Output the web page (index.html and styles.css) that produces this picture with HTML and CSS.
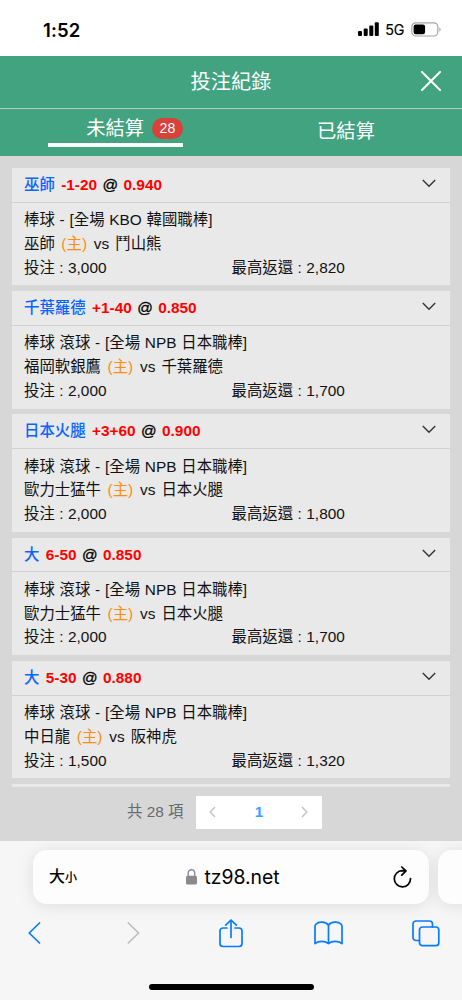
FILE: index.html
```html
<!DOCTYPE html>
<html lang="zh-Hant">
<head>
<meta charset="utf-8">
<meta name="viewport" content="width=device-width">
<title>投注紀錄</title>
<link rel="stylesheet" href="styles.css">
</head>
<body>
<div class="phone">
  <div class="status">
    <span class="time">1:52</span>
    <div class="signals">
      <svg class="bars" width="21" height="14" viewBox="0 0 21 14"><rect x="0" y="9" width="4" height="5" rx="1"/><rect x="5.7" y="6.6" width="4" height="7.4" rx="1"/><rect x="11.3" y="3.5" width="4" height="10.5" rx="1"/><rect x="16.8" y="0.2" width="4" height="13.8" rx="1"/></svg>
      <span class="net">5G</span>
      <svg class="battery" width="31" height="15" viewBox="0 0 31 15"><rect x="0.8" y="0.8" width="26" height="13.2" rx="4" fill="none" stroke="#a5a5a5" stroke-width="1.2"/><rect x="2.6" y="2.5" width="11.5" height="9.8" rx="2.2"/><path d="M28.4 5.2c1.6.7 1.6 3.8 0 4.5z" fill="#a5a5a5"/></svg>
    </div>
  </div>
  <header class="title-bar">
    <h1>投注紀錄</h1>
    <svg class="close" width="20" height="20" viewBox="0 0 20 20"><path d="M1 1L19 19M19 1L1 19"/></svg>
  </header>
  <nav class="tabs">
    <div class="tab"><div class="tab-active"><span>未結算</span><span class="badge">28</span></div></div>
    <div class="tab"><span class="tab-idle">已結算</span></div>
  </nav>
  <main class="content">
    <div class="list">
      <article class="card">
        <div class="card-head"><p><span class="pick">巫師</span> <b>-1-20</b> <i>@</i> <b>0.940</b></p><svg class="chevron" width="14" height="9" viewBox="0 0 14 9"><path d="M.8 1l6.2 6.2L13.200 1"/></svg></div>
        <div class="card-body"><p>棒球 - [全場 KBO 韓國職棒]</p><p>巫師 <em>(主)</em> vs <span class="away">鬥山熊</span></p><div class="amounts"><p>投注 : 3,000</p><p>最高返還 : 2,820</p></div></div>
      </article>
      <article class="card">
        <div class="card-head"><p><span class="pick">千葉羅德</span> <b>+1-40</b> <i>@</i> <b>0.850</b></p><svg class="chevron" width="14" height="9" viewBox="0 0 14 9"><path d="M.8 1l6.2 6.2L13.200 1"/></svg></div>
        <div class="card-body"><p>棒球 滾球 - [全場 NPB 日本職棒]</p><p>福岡軟銀鷹 <em>(主)</em> vs <span class="away">千葉羅德</span></p><div class="amounts"><p>投注 : 2,000</p><p>最高返還 : 1,700</p></div></div>
      </article>
      <article class="card">
        <div class="card-head"><p><span class="pick">日本火腿</span> <b>+3+60</b> <i>@</i> <b>0.900</b></p><svg class="chevron" width="14" height="9" viewBox="0 0 14 9"><path d="M.8 1l6.2 6.2L13.200 1"/></svg></div>
        <div class="card-body"><p>棒球 滾球 - [全場 NPB 日本職棒]</p><p>歐力士猛牛 <em>(主)</em> vs <span class="away">日本火腿</span></p><div class="amounts"><p>投注 : 2,000</p><p>最高返還 : 1,800</p></div></div>
      </article>
      <article class="card">
        <div class="card-head"><p><span class="pick">大</span> <b>6-50</b> <i>@</i> <b>0.850</b></p><svg class="chevron" width="14" height="9" viewBox="0 0 14 9"><path d="M.8 1l6.2 6.2L13.200 1"/></svg></div>
        <div class="card-body"><p>棒球 滾球 - [全場 NPB 日本職棒]</p><p>歐力士猛牛 <em>(主)</em> vs <span class="away">日本火腿</span></p><div class="amounts"><p>投注 : 2,000</p><p>最高返還 : 1,700</p></div></div>
      </article>
      <article class="card">
        <div class="card-head"><p><span class="pick">大</span> <b>5-30</b> <i>@</i> <b>0.880</b></p><svg class="chevron" width="14" height="9" viewBox="0 0 14 9"><path d="M.8 1l6.2 6.2L13.200 1"/></svg></div>
        <div class="card-body"><p>棒球 滾球 - [全場 NPB 日本職棒]</p><p>中日龍 <em>(主)</em> vs <span class="away">阪神虎</span></p><div class="amounts"><p>投注 : 1,500</p><p>最高返還 : 1,320</p></div></div>
      </article>
      <div class="card card-peek"></div>
    </div>
    <div class="pager">
      <span class="total">共 28 項</span>
      <div class="pages">
        <svg width="7" height="12" viewBox="0 0 7 12"><path d="M6 1L1.200 6L6 11"/></svg>
        <strong>1</strong>
        <svg width="7" height="12" viewBox="0 0 7 12"><path d="M1 1L5.800 6L1 11"/></svg>
      </div>
    </div>
  </main>
  <footer class="browser">
    <div class="address-row">
      <div class="address">
        <span class="text-size">大<small>小</small></span>
        <div class="host"><svg width="11" height="16" viewBox="0 0 11 16"><path d="M2.200 8V4.300a3.300 3.500 0 0 1 6.600 0V8" fill="none" stroke="#8a8a8e" stroke-width="1.400"/><rect x="0" y="6.800" width="11" height="8.700" rx="1.600" fill="#8a8a8e"/></svg><span>tz98.net</span></div>
        <svg class="reload" width="19" height="22" viewBox="0 0 19 22"><path d="M13 4.900L9.200 4.700A8.100 8.100 0 1 0 17.500 12.500M8.800 1l4.200 3.900L8.800 9.200"/></svg>
      </div>
      <div class="next-address"></div>
    </div>
    <div class="tools">
      <svg width="13" height="22" viewBox="0 0 13 22"><path d="M11.500 1L1.200 11L11.500 21"/></svg>
      <svg class="disabled" width="13" height="22" viewBox="0 0 13 22"><path d="M1.300 1L11.600 11L1.300 21"/></svg>
      <svg class="share" width="24" height="29" viewBox="0 0 24 29"><path d="M8 9H4a3 3 0 0 0-3 3v12.500a3 3 0 0 0 3 3h16a3 3 0 0 0 3-3V12a3 3 0 0 0-3-3h-4M12 18.500V1.300M6.700 6.200L12 1L17.300 6.200"/></svg>
      <svg class="book" width="29" height="24" viewBox="0 0 29 24"><path d="M14.500 4.300C11.800.2 4.500.2 1.900 3.200Q1 4.200 1 5.500V22.600C4.500 19.600 11 19.600 14.500 22.600C18 19.600 24.500 19.600 28 22.600V5.500Q28 4.200 27.100 3.200C24.500.2 17.200.2 14.500 4.300V22.600"/></svg>
      <svg class="windows" width="28" height="27" viewBox="0 0 28 27"><path d="M7.500 20.500H4a3 3 0 0 1-3-3V4a3 3 0 0 1 3-3h13.500a3 3 0 0 1 3 3v3"/><rect x="7.500" y="7" width="19.300" height="18.700" rx="3"/></svg>
    </div>
    <div class="home"></div>
  </footer>
</div>
</body>
</html>
```
FILE: styles.css
```css
* { box-sizing: border-box; }
body, h1, p { margin: 0; }
body { font-family: "Liberation Sans", "Noto Sans CJK TC", sans-serif; background: #fff; color: #111; }
svg { display: block; flex: none; }
.phone { width: 462px; height: 1000px; overflow: hidden; display: flex; flex-direction: column; }
.status { height: 55.500px; flex: none; padding: 4px 20.500px 0 43px; display: flex; align-items: center; justify-content: space-between; font-family: Inter, sans-serif; color: #000; }
.time { font-size: 18.500px; font-weight: 600; letter-spacing: 0.100px; }
.signals { display: flex; align-items: center; }
.bars { margin: 0 0.500px 1px 0; }
.net { font-size: 14.300px; margin: 0 6px 0 5.500px; font-weight: 400; -webkit-text-stroke: 0.150px #000; }
.title-bar { height: 53.200px; flex: none; background: #41a380; border-bottom: 1px solid #b9c9c2; display: grid; grid-template-columns: 1fr auto 1fr; align-items: center; padding: 0 21px; color: #fff; }
.title-bar h1 { grid-column: 2; font-size: 20.200px; font-weight: 400; line-height: 30px; }
.close { justify-self: end; margin-bottom: 2px; stroke: #fff; stroke-width: 2; fill: none; stroke-linecap: round; }
.tabs { height: 47.500px; flex: none; background: #41a380; display: grid; grid-template-columns: 1fr 1fr; color: #fff; font-size: 19.300px; }
.tab { display: flex; justify-content: center; }
.tab-active { width: 135px; height: 38px; border-bottom: 4px solid #fff; display: flex; justify-content: flex-end; align-items: center; gap: 8px; line-height: 28px; padding-top: 6px; }
.badge { width: 31px; height: 21px; border-radius: 11px; background: #d9413b; font-size: 14.200px; line-height: 21px; text-align: center; }
.tab-idle { line-height: 28px; padding: 9.800px 1px 0 0; }
.content { height: 684.800px; flex: none; background: #d7d7d7; padding: 11.800px 12px 0; }
.list { height: 619.500px; overflow: hidden; display: flex; flex-direction: column; gap: 5.900px; }
.card { flex: none; height: 117.350px; background: #e9e9e9; font-size: 15.400px; }
.card-head { height: 34.700px; display: flex; align-items: center; justify-content: space-between; padding: 0 14px 0 12px; border-bottom: 1.500px solid #d0d0d0; color: #000; }
.card-head p { line-height: 24px; white-space: nowrap; word-spacing: 0.300px; }
.pick { color: #0a64ff; font-weight: 500; margin-right: 1.800px; }
.card-head b { color: #f00; font-weight: 700; }
.card-head i { font-style: normal; -webkit-text-stroke: 0.300px #000; margin: 0 0.800px; }
.chevron { fill: none; stroke: #333; stroke-width: 1.400; margin-bottom: 3px; }
.card-body { padding: 5.500px 12px; line-height: 23.700px; word-spacing: 0.500px; }
.card-body em { color: #ff8d0a; font-style: normal; margin: 0 2px 0 1.800px; }
.away { margin-left: 1.300px; }
.amounts { display: grid; grid-template-columns: 207.500px 1fr; word-spacing: 0.200px; }
.card-peek { height: 20px; }
.pager { height: 33px; margin-top: 9px; display: flex; align-items: center; color: #68696d; font-size: 15.400px; padding-left: 115px; gap: 13px; }
.total { line-height: 24px; padding-bottom: 1px; }
.pages { width: 126px; height: 33px; background: #fff; display: flex; align-items: center; justify-content: space-between; padding: 0 14px 1px 13px; }
.pages strong { color: #409eff; }
.pages svg { fill: none; stroke: #c0c4cc; stroke-width: 1.500; }
.browser { flex: 1; background: #f6f6f6; padding-top: 9px; overflow: hidden; color: #000; }
.address-row { display: flex; gap: 9px; padding-left: 33px; }
.address, .next-address { flex: none; height: 54px; background: #fdfdfd; border-radius: 14px; box-shadow: 0 2px 16px rgba(0,0,0,.10); }
.address { width: 396px; display: grid; grid-template-columns: 1fr auto 1fr; align-items: center; padding: 0 17px 0 16px; }
.next-address { width: 60px; }
.text-size { font-size: 16px; font-weight: 500; line-height: 24px; padding-top: 2px; }
.text-size small { font-size: 12px; }
.host { display: flex; align-items: center; gap: 8px; padding: 1px 0 0 4px; font: 19.400px/28px Inter, sans-serif; letter-spacing: -0.050px; }
.reload { justify-self: end; stroke: #000; stroke-width: 1.700; fill: none; stroke-linejoin: round; stroke-linecap: round; }
.tools { width: 490px; height: 29px; margin: 15px 0 0 -16px; display: grid; grid-template-columns: 101px repeat(4, 1fr); justify-items: center; align-items: center; }
.tools svg { fill: none; stroke: #087bff; stroke-width: 1.700; stroke-linecap: round; stroke-linejoin: round; }
.tools .disabled { stroke: #bdbdbf; }
.tools .windows { margin-left: 2px; }
.home { width: 165px; height: 6px; border-radius: 3px; background: #000; margin: 36px auto 0; }
```
